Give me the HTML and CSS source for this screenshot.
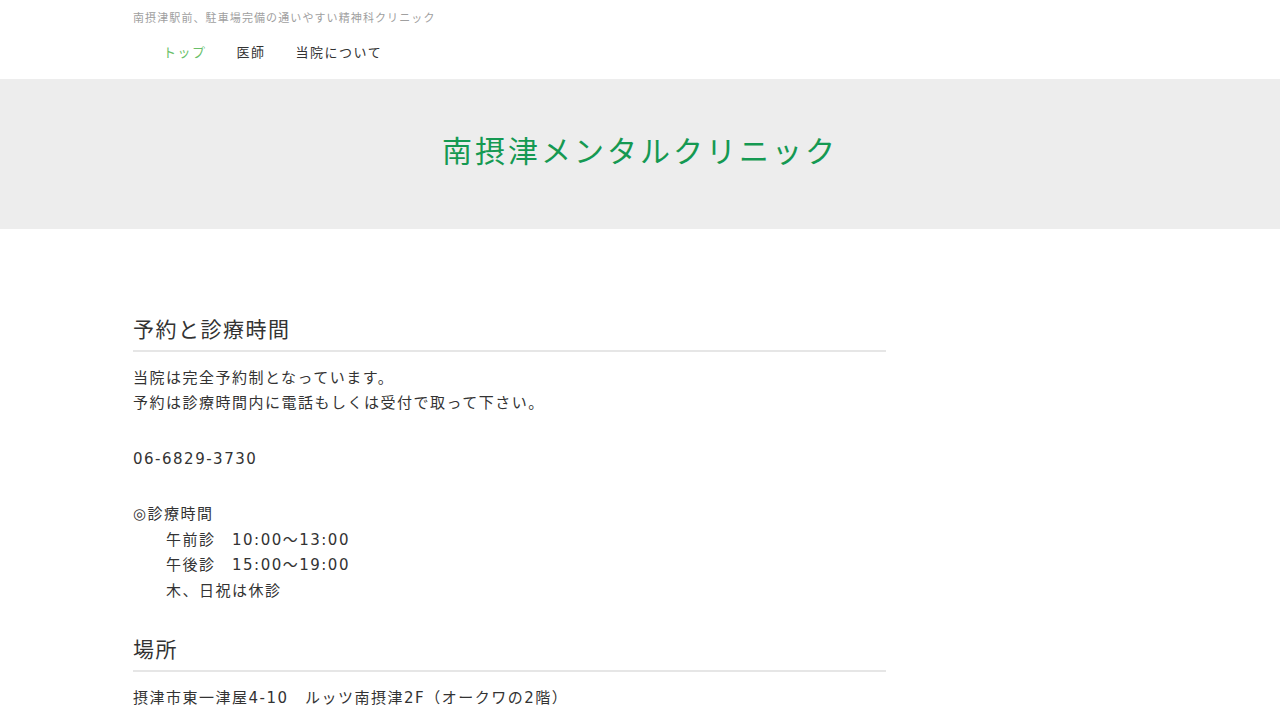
FILE: index.html
```html
<!DOCTYPE html>
<html lang="ja">

<head>
  <meta charset="UTF-8" />
  <title>南摂津メンタルクリニック</title>
  <link rel="stylesheet" href="styles.css">
</head>

<body>
  <header class="site-header">
    <div class="container">
      <p class="tagline">南摂津駅前、駐車場完備の通いやすい精神科クリニック</p>
      <nav class="global-nav">
        <ul>
          <li class="current"><a href="#">トップ</a></li>
          <li><a href="#">医師</a></li>
          <li><a href="#">当院について</a></li>
        </ul>
      </nav>
    </div>
  </header>

  <div class="main-visual">
    <h1 class="site-title">南摂津メンタルクリニック</h1>
  </div>

  <div class="container">
    <main class="main-column">
      <h2 class="section-title">予約と診療時間</h2>
      <p>当院は完全予約制となっています。<br>予約は診療時間内に電話もしくは受付で取って下さい。</p>
      <p>06-6829-3730</p>
      <p>◎診療時間<br>　　午前診　10:00～13:00<br>　　午後診　15:00～19:00<br>　　木、日祝は休診</p>

      <h2 class="section-title">場所</h2>
      <p>摂津市東一津屋4-10　ルッツ南摂津2F（オークワの2階）</p>
    </main>
  </div>
</body>

</html>
```

FILE: styles.css
```css
body {
  margin: 0;
  font-family: "DejaVu Sans", "Noto Sans CJK JP", sans-serif;
  font-size: 15px;
  line-height: 1.7;
  letter-spacing: 0.1em;
  color: #333;
  background: #fff;
}

.container {
  width: 1014px;
  margin: 0 auto;
}

/* header */
.site-header {
  padding: 11px 0 16px;
}

.tagline {
  margin: 0;
  font-size: 11px;
  line-height: 16px;
  letter-spacing: 0.1em;
  color: #a0a0a0;
}

.global-nav ul {
  display: flex;
  list-style: none;
  margin: 16px 0 0;
  padding: 0 0 0 15px;
}

.global-nav li a {
  display: block;
  padding: 0 15px;
  font-size: 13px;
  line-height: 20px;
  color: #333;
  text-decoration: none;
}

.global-nav li.current a {
  color: #6abf69;
}

/* main visual */
.main-visual {
  background: #ededed;
  padding: 53px 0 57px;
  text-align: center;
}

.site-title {
  margin: 0;
  font-size: 30px;
  font-weight: normal;
  line-height: 40px;
  letter-spacing: 0.1em;
  color: #159952;
}

/* content */
.main-column {
  width: 753px;
  padding: 55px 0 40px;
}

.section-title {
  margin: 31px 0 14px;
  padding-bottom: 3px;
  border-bottom: 2px solid #e6e6e6;
  font-size: 21px;
  font-weight: normal;
  line-height: 1.5;
}

.main-column p {
  margin: 0 0 30px;
}
```
